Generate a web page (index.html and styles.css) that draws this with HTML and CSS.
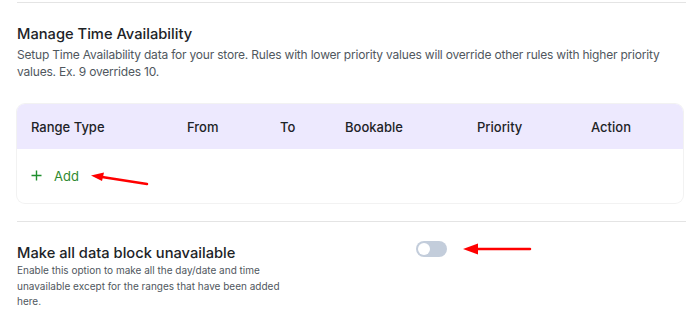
FILE: index.html
```html
<!DOCTYPE html>
<html>
<head>
  <meta charset="utf-8"/>
  <title>Time Availability</title>
  <link rel="stylesheet" href="styles.css">
</head>
<body>
  <div class="panel">
    <hr class="divider">

    <section class="section">
      <h2 class="section-title">Manage Time Availability</h2>
      <p class="section-desc">Setup Time Availability data for your store. Rules with lower priority values will override other rules with higher priority values. Ex. 9 overrides 10.</p>

      <div class="range-table">
        <div class="range-head">
          <span class="col col-type">Range Type</span>
          <span class="col col-from">From</span>
          <span class="col col-to">To</span>
          <span class="col col-book">Bookable</span>
          <span class="col col-prio">Priority</span>
          <span class="col col-action">Action</span>
        </div>
        <div class="range-body">
          <button type="button" class="add-btn">
            <svg class="add-plus" width="11" height="11" viewBox="0 0 11 11">
              <path d="M5.5 0.5v10M0.5 5.5h10" stroke="#1e8f2e" stroke-width="1.4"/>
            </svg>
            Add
          </button>
        </div>
      </div>
    </section>

    <hr class="divider divider-mid">

    <section class="option-row">
      <div class="option-text">
        <h3 class="option-title">Make all data block unavailable</h3>
        <p class="option-desc">Enable this option to make all the day/date and time unavailable except for the ranges that have been added here.</p>
      </div>
      <label class="toggle">
        <input type="checkbox">
        <span class="toggle-track"><span class="toggle-knob"></span></span>
      </label>
    </section>

    <!-- annotation arrows -->
    <svg class="arrow arrow-add" width="60" height="16" viewBox="0 0 60 16">
      <line x1="57" y1="13" x2="12" y2="6" stroke="#f00" stroke-width="2.5" stroke-linecap="round"/>
      <polygon points="1,4.5 14,1.5 12,10" fill="#f00"/>
    </svg>
    <svg class="arrow arrow-toggle" width="72" height="14" viewBox="0 0 72 14">
      <line x1="68" y1="7" x2="12" y2="7" stroke="#f00" stroke-width="2.5" stroke-linecap="round"/>
      <polygon points="1,7 16,1.5 16,12.5" fill="#f00"/>
    </svg>
  </div>
</body>
</html>
```

FILE: styles.css
```css
html, body {
  margin: 0;
  padding: 0;
  background: #fff;
}

body {
  font-family: Inter, 'Noto Sans', Arial, sans-serif;
  color: #1e1e1e;
}

.panel {
  position: relative;
  padding: 2px 3px 0 17px;
}

.divider {
  border: none;
  border-top: 1px solid #e4e4e4;
  margin: 0 -3px 0 0;
}

.section {
  padding-top: 21px;
}

.section-title {
  margin: 0;
  font-size: 14.7px;
  line-height: 20px;
  font-weight: 500;
  color: #1d2327;
}

.section-desc {
  margin: 2px 0 0;
  font-size: 12px;
  letter-spacing: -0.2px;
  line-height: 17px;
  color: #50575e;
  max-width: 666px;
}

.range-table {
  margin-top: 24px;
  border-radius: 8px;
  box-shadow: 0 0 0 1px #f2f2f2;
}

.range-head {
  display: grid;
  grid-template-columns: 156px 93px 65px 132px 114px auto;
  align-items: center;
  height: 45px;
  padding-left: 14px;
  background: #ede9fe;
  border-radius: 8px 8px 0 0;
  font-size: 13px;
  font-weight: 500;
  color: #1d2327;
}

.range-body {
  height: 54px;
  display: flex;
  align-items: center;
  padding-left: 14px;
  border-radius: 0 0 8px 8px;
}

.add-btn {
  display: flex;
  align-items: center;
  gap: 12px;
  padding: 0;
  border: none;
  background: none;
  font-family: inherit;
  font-size: 13px;
  color: #2f8a2f;
  cursor: pointer;
  margin-top: -1px;
}

.add-plus {
  display: block;
}

.divider-mid {
  margin-top: 18px;
}

.option-row {
  display: grid;
  grid-template-columns: 399px auto;
  padding-top: 21px;
}

.option-title {
  margin: 0;
  font-size: 14.7px;
  line-height: 20px;
  font-weight: 500;
  color: #1d2327;
}

.option-desc {
  margin: 0;
  font-size: 10px;
  line-height: 15.5px;
  color: #50575e;
  max-width: 280px;
}

.toggle {
  display: block;
  width: 31px;
  height: 16px;
  margin-top: -2px;
  cursor: pointer;
}

.toggle input {
  display: none;
}

.toggle-track {
  display: block;
  position: relative;
  width: 31px;
  height: 16px;
  border-radius: 8px;
  background: #c3cddb;
}

.toggle-knob {
  position: absolute;
  top: 2px;
  left: 2px;
  width: 12px;
  height: 12px;
  border-radius: 50%;
  background: #fff;
}

.arrow {
  position: absolute;
}

.arrow-add {
  left: 90px;
  top: 171px;
}

.arrow-toggle {
  left: 462px;
  top: 242px;
}
```
